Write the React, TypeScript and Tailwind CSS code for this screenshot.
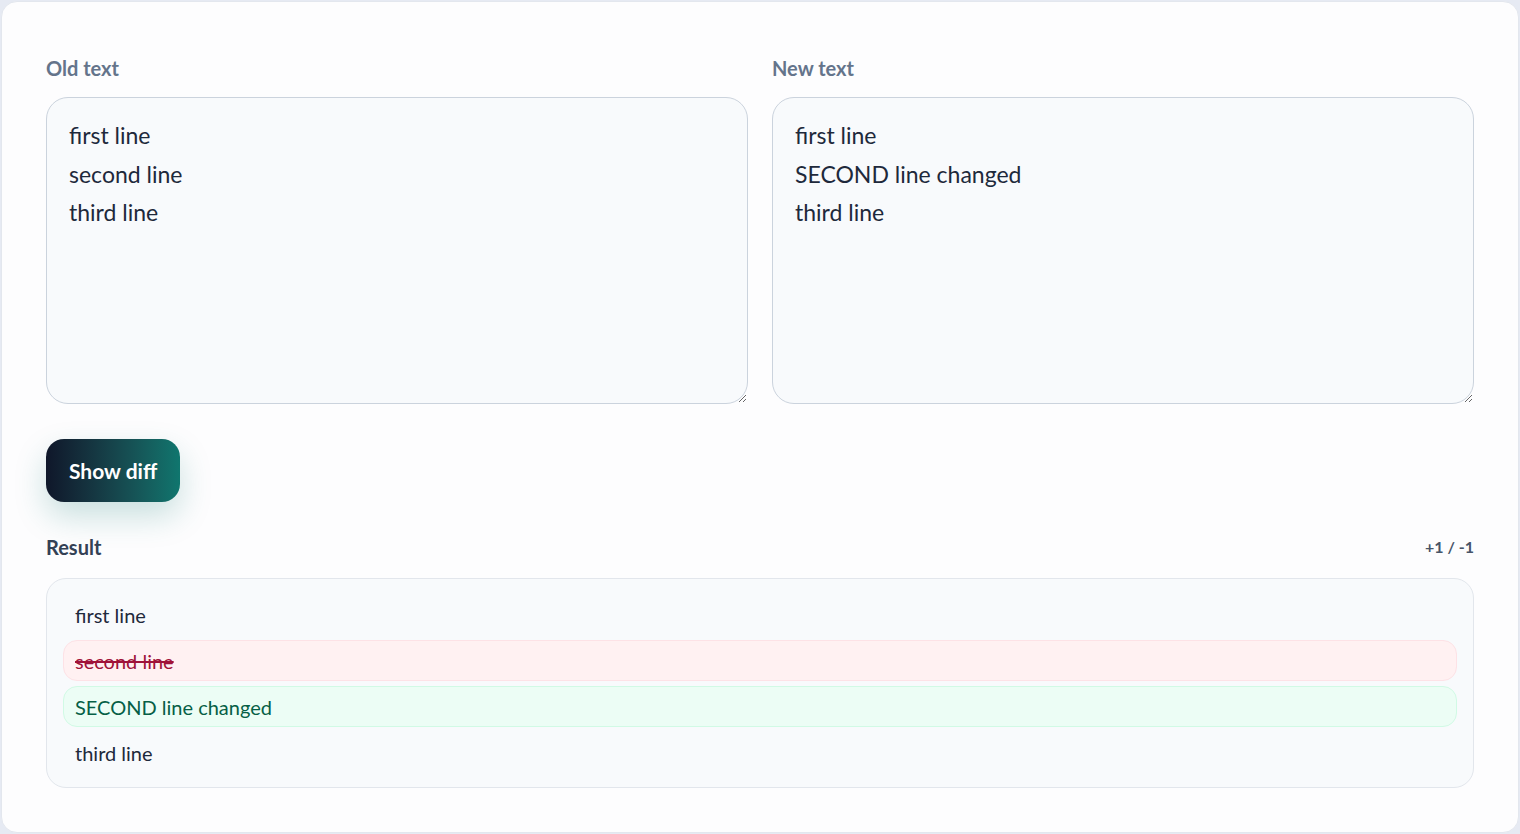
import { useState } from "react";

const font = { fontFamily: '"Lato", "Open Sans", sans-serif' };

type DiffLine = { kind: "same" | "del" | "add"; text: string };

// naive line-by-line comparison, good enough for short texts
const diffLines = (a: string, b: string): DiffLine[] => {
  const left = a.split("\n");
  const right = b.split("\n");
  const out: DiffLine[] = [];
  const max = Math.max(left.length, right.length);
  for (let i = 0; i < max; i++) {
    const l = left[i];
    const r = right[i];
    if (l === r) out.push({ kind: "same", text: l });
    else {
      if (l !== undefined) out.push({ kind: "del", text: l });
      if (r !== undefined) out.push({ kind: "add", text: r });
    }
  }
  return out;
};

export default function App() {
  const [oldText, setOldText] = useState("first line\nsecond line\nthird line");
  const [newText, setNewText] = useState("first line\nSECOND line changed\nthird line");
  const [result, setResult] = useState<DiffLine[]>(() => diffLines(oldText, newText));

  const added = result.filter((l) => l.kind === "add").length;
  const removed = result.filter((l) => l.kind === "del").length;

  return (
    <div className="h-[834px] w-full bg-[#e6eaf3] p-px" style={font}>
      <div className="h-full rounded-2xl border border-[#e3e7ee] bg-[#fdfdfe] px-11 pt-[54px]">
        <div className="grid grid-cols-2 gap-6">
          <label className="flex flex-col">
            <span className="mb-[17px] text-[20px] leading-6 font-bold text-[#64748b]">Old text</span>
            <textarea
              value={oldText}
              onChange={(e) => setOldText(e.target.value)}
              className="h-[307px] rounded-[22px] border border-[#cbd3dd] bg-[#f8fafc] px-[22px] pt-[18px] text-[23px] leading-[38.5px] text-[#1e293b] outline-none"
            />
          </label>
          <label className="flex flex-col">
            <span className="mb-[17px] text-[20px] leading-6 font-bold text-[#64748b]">New text</span>
            <textarea
              value={newText}
              onChange={(e) => setNewText(e.target.value)}
              className="h-[307px] rounded-[22px] border border-[#cbd3dd] bg-[#f8fafc] px-[22px] pt-[18px] text-[23px] leading-[38.5px] text-[#1e293b] outline-none"
            />
          </label>
        </div>

        <button
          onClick={() => setResult(diffLines(oldText, newText))}
          className="mt-[35px] h-[63px] rounded-[18px] bg-gradient-to-r from-[#0f172a] to-[#0f766e] px-[23px] text-[21px] font-bold text-white shadow-[0_14px_32px_rgba(15,118,110,0.22)]"
        >
          Show diff
        </button>

        <div className="mt-[33px] mb-[19px] flex items-center justify-between">
          <span className="text-[20px] leading-6 font-bold text-[#334155]">Result</span>
          <span className="text-[16px] font-bold text-[#475569]">
            +{added} / -{removed}
          </span>
        </div>

        <div className="flex flex-col gap-[5px] rounded-[20px] border border-[#e2e6ec] bg-[#f8fafc] px-4 pt-[15px] pb-[14px]">
          {result.map((line, i) => (
            <div
              key={i}
              className={
                line.kind === "del"
                  ? "flex h-[41px] items-center rounded-[14px] border border-[#fde2e6] bg-[#fff1f2] px-[11px] text-[20px] text-[#9f1239] line-through"
                  : line.kind === "add"
                    ? "flex h-[41px] items-center rounded-[14px] border border-[#d1fae5] bg-[#ecfdf5] px-[11px] text-[20px] text-[#065f46]"
                    : "flex h-[41px] items-center rounded-[14px] border border-transparent px-[11px] text-[20px] text-[#1e293b]"
              }
            >
              {line.text}
            </div>
          ))}
        </div>
      </div>
    </div>
  );
}
